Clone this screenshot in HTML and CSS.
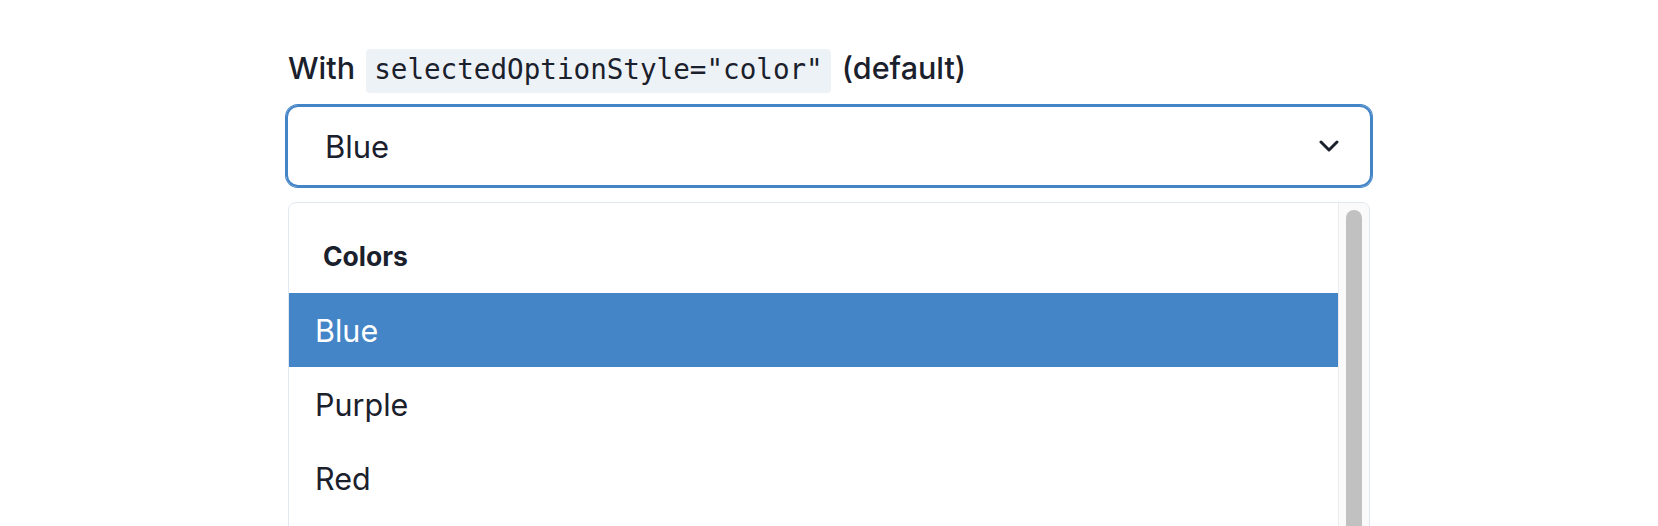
FILE: index.html
```html
<!DOCTYPE html>
<html lang="en">
<head>
<meta charset="utf-8">
<title>Select</title>
<link rel="stylesheet" href="styles.css">
</head>
<body>
<div class="page">
  <div class="field">
    <p class="label">With <code class="code">selectedOptionStyle="color"</code> (default)</p>
    <div class="select">
      <span class="value">Blue</span>
      <svg class="chevron" width="20" height="12" viewBox="0 0 20 12"><path d="M2 2 L10 10 L18 2" fill="none" stroke="#1a202c" stroke-width="3" stroke-linecap="round" stroke-linejoin="round"/></svg>
    </div>
    <div class="menu">
      <div class="list">
        <div class="group-title">Colors</div>
        <div class="option selected">Blue</div>
        <div class="option">Purple</div>
        <div class="option">Red</div>
      </div>
      <div class="scrollbar"><div class="thumb"></div></div>
    </div>
  </div>
</div>
</body>
</html>
```
FILE: styles.css
```css
html, body {
  margin: 0;
  padding: 0;
  background: #ffffff;
  overflow: hidden;
}
body {
  font-family: Inter, "Noto Sans", sans-serif;
  color: #1a202c;
}
.page {
  padding: 45px 0 0 286px;
}
.field {
  width: 1086px;
}
.label {
  margin: 0 0 15px 2px;
  height: 45px;
  font-size: 30.5px;
  line-height: 45px;
  font-weight: 450;
}
.code {
  font-family: "DejaVu Sans Mono", "Liberation Mono", monospace;
  font-size: 27.6px;
  line-height: 1;
  background: #edf2f7;
  padding: 4px 8px 7px;
  border-radius: 4px;
  margin: 0 3px;
}
.select {
  box-sizing: border-box;
  height: 82px;
  border: 2px solid #4485c8;
  box-shadow: 0 0 0 1px #4485c8;
  border-radius: 12px;
  display: flex;
  align-items: center;
  justify-content: space-between;
  padding: 0 31px 0 37px;
  font-size: 31px;
}
.chevron {
  display: block;
}
.menu {
  margin: 15px 2px 0 2px;
  height: 420px;
  border: 1px solid #e2e8f0;
  border-radius: 8px;
  display: flex;
  overflow: hidden;
}
.list {
  flex: 1;
}
.group-title {
  font-size: 26.5px;
  font-weight: 700;
  line-height: 39px;
  padding: 34px 0 17px 34px;
}
.option {
  height: 74px;
  display: flex;
  align-items: center;
  padding-left: 26px;
  font-size: 30.5px;
}
.option.selected {
  background: #4485c8;
  color: #ffffff;
}
.scrollbar {
  width: 31px;
  background: #fafafa;
  border-left: 1px solid #ececec;
  padding: 7px 0 0 7px;
  box-sizing: border-box;
}
.thumb {
  width: 16px;
  height: 400px;
  background: #c1c1c1;
  border-radius: 8px;
}
```
